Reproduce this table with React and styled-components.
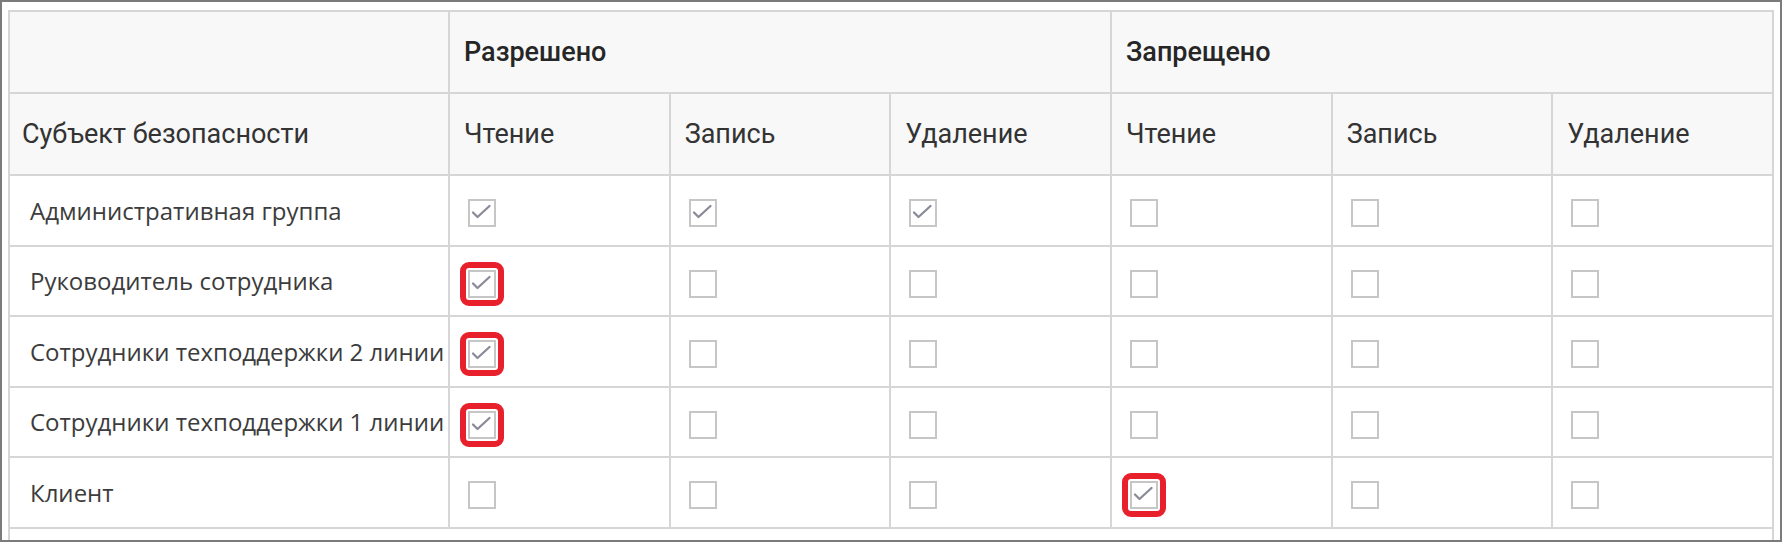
import styled, { createGlobalStyle } from "styled-components";

const GlobalStyle = createGlobalStyle`
  body {
    margin: 0;
    background: #ffffff;
  }
`;

const lineColor = "#d6d6d6";
const headBackground = "#f8f8f8";

const Frame = styled.div`
  width: 1782px;
  height: 542px;
  box-sizing: border-box;
  border: 2px solid #7b7b7b;
  padding: 8px 6px 0 6px;
  overflow: hidden;
  background: #ffffff;
`;

const Table = styled.table`
  width: 100%;
  border-collapse: collapse;
  table-layout: fixed;
`;

const HeadCell = styled.th`
  height: 80px;
  padding: 0 ${(p) => (p.$first ? "12px" : "14px")};
  background: ${headBackground};
  border: 2px solid ${lineColor};
  text-align: left;
  vertical-align: middle;
  font-family: Roboto, "Open Sans", sans-serif;
  font-size: 27px;
  font-weight: ${(p) => (p.$group ? 500 : 400)};
  color: ${(p) => (p.$group ? "#262626" : "#333333")};
  white-space: nowrap;
`;

const Cell = styled.td`
  height: 68.5px;
  padding: 0 20px;
  border: 2px solid ${lineColor};
  vertical-align: middle;
  font-family: "Open Sans", "Liberation Sans", sans-serif;
  font-size: 24px;
  color: #3c3c3c;
  white-space: nowrap;
  overflow: visible;
`;

const FillerCell = styled.td`
  height: 60px;
  border: 2px solid ${lineColor};
`;

const Box = styled.span`
  position: relative;
  display: block;
  width: 28px;
  height: 28px;
  box-sizing: border-box;
  margin-top: 6px;
  margin-left: -2px;
  border: 2px solid #c6c6c6;
  background: #ffffff;

  svg {
    display: block;
  }

  &::after {
    content: "";
    display: ${(p) => (p.$marked ? "block" : "none")};
    position: absolute;
    inset: -10px;
    border: 6px solid #e8202c;
    border-radius: 9px;
  }
`;

const Checkbox = ({ checked, marked }) => (
  <Box $marked={marked}>
    {checked && (
      <svg width="24" height="24" viewBox="0 0 24 24">
        <path
          d="M3 11.5 L7.5 16 L19.5 5"
          fill="none"
          stroke="#8a8b98"
          strokeWidth="2.3"
          strokeLinecap="round"
          strokeLinejoin="round"
        />
      </svg>
    )}
  </Box>
);

const actions = ["Чтение", "Запись", "Удаление"];

const subjects = [
  { name: "Административная группа", perms: [1, 1, 1, 0, 0, 0], marked: -1 },
  { name: "Руководитель сотрудника", perms: [1, 0, 0, 0, 0, 0], marked: 0 },
  { name: "Сотрудники техподдержки 2 линии", perms: [1, 0, 0, 0, 0, 0], marked: 0 },
  { name: "Сотрудники техподдержки 1 линии", perms: [1, 0, 0, 0, 0, 0], marked: 0 },
  { name: "Клиент", perms: [0, 0, 0, 1, 0, 0], marked: 3 },
];

const App = () => {
  return (
    <>
      <GlobalStyle />
      <Frame>
        <Table>
          <colgroup>
            <col style={{ width: "440px" }} />
            <col />
            <col />
            <col />
            <col />
            <col />
            <col />
          </colgroup>
          <thead>
            <tr>
              <HeadCell $first />
              <HeadCell $group colSpan={3}>
                Разрешено
              </HeadCell>
              <HeadCell $group colSpan={3}>
                Запрещено
              </HeadCell>
            </tr>
            <tr>
              <HeadCell $first>Субъект безопасности</HeadCell>
              {[...actions, ...actions].map((action, i) => (
                <HeadCell key={i}>{action}</HeadCell>
              ))}
            </tr>
          </thead>
          <tbody>
            {subjects.map((subject) => (
              <tr key={subject.name}>
                <Cell>{subject.name}</Cell>
                {subject.perms.map((value, i) => (
                  <Cell key={i}>
                    <Checkbox checked={!!value} marked={subject.marked === i} />
                  </Cell>
                ))}
              </tr>
            ))}
            <tr>
              <FillerCell colSpan={7} />
            </tr>
          </tbody>
        </Table>
      </Frame>
    </>
  );
};

export default App;
